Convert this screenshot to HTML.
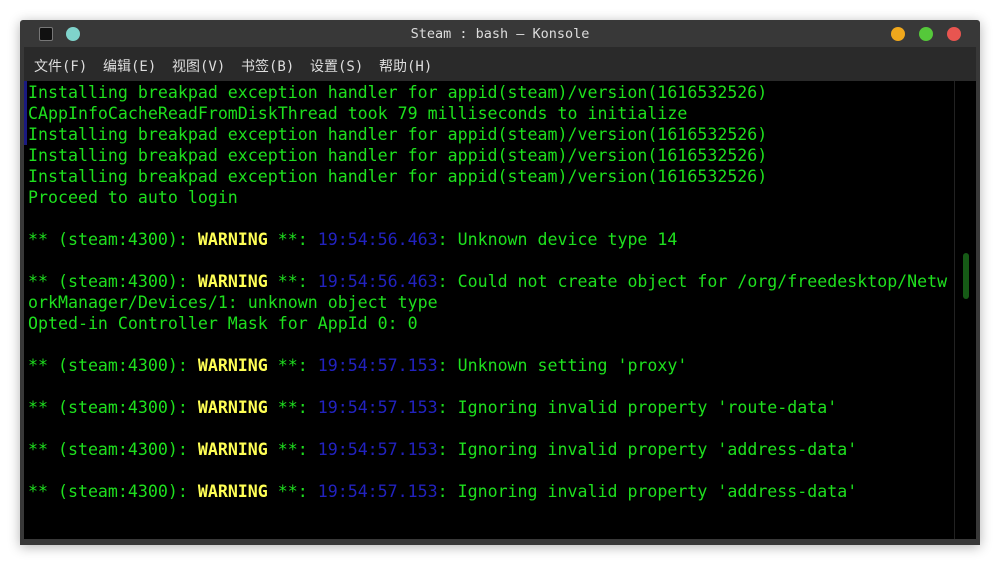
<!DOCTYPE html>
<html><head><meta charset="utf-8"><style>
body{margin:0;width:1000px;height:565px;background:#fff;position:relative;overflow:hidden;font-family:"DejaVu Sans Mono","Liberation Mono",monospace}
.win{position:absolute;left:20px;top:20px;width:960px;height:525px;background:#383838;box-shadow:0 2px 12px rgba(0,0,0,.3);border-radius:3px 3px 0 0}
.title{position:absolute;left:0;top:1px;width:960px;height:27px;text-align:center;line-height:27px;color:#ddd;font-size:13.5px}
.menu{position:absolute;left:4px;top:27px;width:952px;height:34px;background:#2a2a2a;color:#ddd;font-size:14px;font-family:"DejaVu Sans Mono","Noto Sans CJK SC",monospace}
.menu span{position:absolute;top:9px}
.term{position:absolute;left:4px;top:61px;width:952px;height:458px;background:#000}
.txt{position:absolute;left:4px;top:1px;font-size:16.6px;line-height:21px;color:#1ee01e;white-space:pre}
.w{color:#ffff55;font-weight:bold}.b{color:#2222c0}
.dot{position:absolute;top:7px;width:14px;height:14px;border-radius:50%}
</style></head><body>
<div class="win">
<div style="position:absolute;left:19px;top:7px;width:12px;height:12px;background:#111;border:1px solid #777;border-radius:2px"></div>
<div class="dot" style="left:46px;background:#7fd3cb"></div>
<div class="title">Steam : bash — Konsole</div>
<div class="dot" style="left:871px;background:#f0a81c"></div>
<div class="dot" style="left:899px;background:#55c83a"></div>
<div class="dot" style="left:927px;background:#e85550"></div>
<div class="menu"><span style="left:10px">文件(F)</span><span style="left:79px">编辑(E)</span><span style="left:148px">视图(V)</span><span style="left:217px">书签(B)</span><span style="left:286px">设置(S)</span><span style="left:355px">帮助(H)</span></div>
<div class="term">
<div style="position:absolute;left:0;top:0;width:3px;height:64px;background:#1a1a80"></div>
<div style="position:absolute;left:930px;top:0;width:1px;height:458px;background:#222"></div>
<div style="position:absolute;left:939px;top:172px;width:6px;height:46px;background:#165a16;border-radius:3px"></div>
<div class="txt">Installing breakpad exception handler for appid(steam)/version(1616532526)
CAppInfoCacheReadFromDiskThread took 79 milliseconds to initialize
Installing breakpad exception handler for appid(steam)/version(1616532526)
Installing breakpad exception handler for appid(steam)/version(1616532526)
Installing breakpad exception handler for appid(steam)/version(1616532526)
Proceed to auto login

** (steam:4300): <span class="w">WARNING</span> **: <span class="b">19:54:56.463</span>: Unknown device type 14

** (steam:4300): <span class="w">WARNING</span> **: <span class="b">19:54:56.463</span>: Could not create object for /org/freedesktop/Netw
orkManager/Devices/1: unknown object type
Opted-in Controller Mask for AppId 0: 0

** (steam:4300): <span class="w">WARNING</span> **: <span class="b">19:54:57.153</span>: Unknown setting 'proxy'

** (steam:4300): <span class="w">WARNING</span> **: <span class="b">19:54:57.153</span>: Ignoring invalid property 'route-data'

** (steam:4300): <span class="w">WARNING</span> **: <span class="b">19:54:57.153</span>: Ignoring invalid property 'address-data'

** (steam:4300): <span class="w">WARNING</span> **: <span class="b">19:54:57.153</span>: Ignoring invalid property 'address-data'</div>
</div>
</div>
</body></html>
